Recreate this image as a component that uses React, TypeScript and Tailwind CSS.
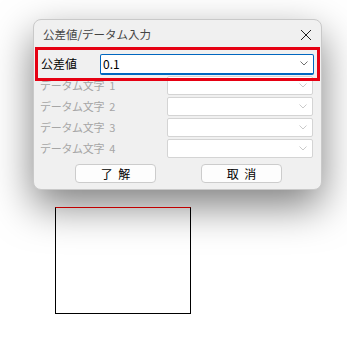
const Chevron = ({ color = "#606060" }: { color?: string }) => (
  <svg width="8" height="5" viewBox="0 0 8 5" className="shrink-0">
    <path d="M0.5 0.5 L4 4 L7.5 0.5" fill="none" stroke={color} strokeWidth="0.9" />
  </svg>
);

const rows = ["1", "2", "3", "4"];

export default function App() {
  return (
    <div
      className="w-[347px] h-[337px] bg-white overflow-hidden pt-[19px]"
      style={{ fontFamily: '"Noto Sans CJK JP", "Noto Sans", sans-serif' }}
    >
      {/* dialog */}
      <div className="ml-[33px] w-[289px] h-[171px] rounded-[8px] bg-[#f0f0f0] border border-[#c9c9c9] shadow-[0_16px_40px_rgba(0,0,0,0.5)] flex flex-col">
        <div className="h-[27px] flex items-center justify-between pl-[9px] pr-[9px]">
          <span className="text-[11.5px] text-[#444444] leading-none pt-[2px]">公差値/データム入力</span>
          <svg width="12" height="12" viewBox="0 0 12 12" className="mt-[2px]">
            <path d="M1 1 L11 11 M11 1 L1 11" stroke="#202020" strokeWidth="1" />
          </svg>
        </div>

        {/* highlighted row */}
        <div className="relative z-10 ml-[1px] w-[285px] h-[34px] border-[3px] border-[#e60012] flex items-center pl-[3px] pr-[3px]">
          <span className="w-[59px] text-[12px] text-black leading-none">公差値</span>
          <div className="flex-1 h-[21px] bg-white border border-[#0067c0] border-b-2 rounded-[2px] flex items-center justify-between pl-[2px] pr-[5px]">
            <span className="text-[12px] text-black leading-none">0.1</span>
            <Chevron />
          </div>
        </div>

        <div className="mt-[-5px] flex flex-col gap-[2px]">
          {rows.map((n) => (
            <div key={n} className="flex items-center h-[19px] pl-[6px]">
              <span className="w-[127px] flex text-[11px] text-[#a6a6a6] leading-none tracking-[-0.3px]">
                データム文字<span className="ml-[5px]">{n}</span>
              </span>
              <div className="w-[146px] h-[19px] bg-white border border-[#d4d4d4] rounded-[2px] flex items-center justify-end pr-[5px]">
                <Chevron color="#c4c4c4" />
              </div>
            </div>
          ))}
        </div>

        <div className="mt-[6px] flex pl-[41px] gap-[45px]">
          <div className="w-[81px] h-[19px] bg-[#fdfdfd] border border-[#cccccc] rounded-[4px] flex items-center justify-center text-[12px] text-black leading-none">
            了&nbsp;&nbsp;解
          </div>
          <div className="w-[81px] h-[19px] bg-[#fdfdfd] border border-[#cccccc] rounded-[4px] flex items-center justify-center text-[12px] text-black leading-none">
            取&nbsp;&nbsp;消
          </div>
        </div>
      </div>

      {/* frame below */}
      <div className="ml-[55px] mt-[17px] w-[136px] h-[107px] border-[1.5px] border-black border-t-[#c00000]" />
    </div>
  );
}
